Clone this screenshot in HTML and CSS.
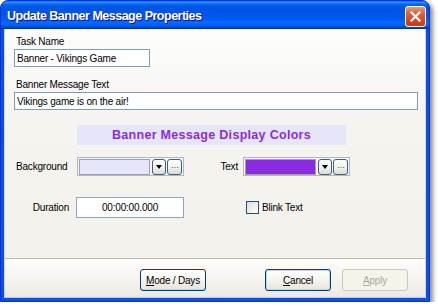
FILE: index.html
```html
<!DOCTYPE html>
<html lang="en">
<head>
  <meta charset="UTF-8">
  <title>Update Banner Message Properties</title>
  <link rel="stylesheet" href="styles.css">
</head>
<body>
  <div class="window">
    <div class="titlebar">
      <span class="title">Update Banner Message Properties</span>
      <button class="close" type="button" aria-label="Close">
        <svg width="19" height="19" viewBox="0 0 19 19">
          <path d="M5.5 5.5 L13.5 13.5 M13.5 5.5 L5.5 13.5" stroke="#fff" stroke-width="2.2" stroke-linecap="square"/>
        </svg>
      </button>
    </div>

    <div class="client">
      <div class="main">
        <div class="field">
          <label for="taskName">Task Name</label>
          <input type="text" id="taskName" class="textbox task" value="Banner - Vikings Game">
        </div>

        <div class="field second">
          <label for="bannerText">Banner Message Text</label>
          <input type="text" id="bannerText" class="textbox wide" value="Vikings game is on the air!">
        </div>

        <div class="band">Banner Message Display Colors</div>

        <div class="row colors">
          <span class="lbl lbl-bg">Background</span>
          <div class="combo">
            <span class="swatch lavender"></span>
            <span class="mini drop"><i class="arrow"></i></span>
            <span class="mini dots">···</span>
          </div>
          <span class="lbl lbl-text">Text</span>
          <div class="combo">
            <span class="swatch purple"></span>
            <span class="mini drop"><i class="arrow"></i></span>
            <span class="mini dots">···</span>
          </div>
        </div>

        <div class="row duration">
          <label class="lbl lbl-dur" for="duration">Duration</label>
          <input type="text" id="duration" class="textbox time" value="00:00:00.000">
          <span class="check"></span>
          <span class="check-label">Blink Text</span>
        </div>
      </div>

      <div class="buttons">
        <button type="button" class="btn"><u>M</u>ode / Days</button>
        <button type="button" class="btn cancel"><u>C</u>ancel</button>
        <button type="button" class="btn apply" disabled><u>A</u>pply</button>
      </div>
    </div>
  </div>
</body>
</html>
```

FILE: styles.css
```css
body {
  margin: 0;
  background: #fff;
  font-family: "Liberation Sans", Arial, sans-serif;
  font-size: 10px;
  letter-spacing: -0.2px;
  color: #000;
}

.window {
  width: 430px;
  height: 302px;
  box-sizing: border-box;
  display: flex;
  flex-direction: column;
  background: #0b50e0;
  border: 1px solid #0831d9;
  border-radius: 8px 8px 0 0;
  box-shadow: 3px 3px 4px rgba(0, 0, 0, 0.45);
}

.titlebar {
  height: 28px;
  display: flex;
  align-items: center;
  justify-content: space-between;
  padding: 0 3px 0 6px;
  border-radius: 7px 7px 0 0;
  background: linear-gradient(to bottom, #0058ee 0%, #3a93ff 4%, #288eff 6%, #127dff 8%, #036ffc 10%, #0262ee 14%, #0057e5 20%, #0054e3 24%, #0055eb 56%, #005bf5 66%, #026afe 76%, #0062ef 86%, #0052d6 92%, #0040ab 96%, #003092 100%);
}

.title {
  padding-top: 1px;
  color: #fff;
  font-size: 12.5px;
  font-weight: bold;
  letter-spacing: -0.5px;
  text-shadow: 1px 1px #0f1089;
}

.close {
  width: 21px;
  height: 21px;
  padding: 0;
  margin-top: 2px;
  display: flex;
  align-items: center;
  justify-content: center;
  border: 1px solid #fff;
  border-radius: 3px;
  background: linear-gradient(to bottom, #e99a7e 0%, #e2643f 30%, #d4481e 70%, #c33b16 100%);
}

.client {
  flex: 1;
  margin: 0 3px 3px;
  display: flex;
  flex-direction: column;
  border-left: 1px solid #d9d6c9;
  border-right: 1px solid #d9d6c9;
}

.main {
  height: 230px;
  box-sizing: border-box;
  padding: 7px 7px 0 9px;
  border-bottom: 1px solid #bcb9a8;
  background: linear-gradient(to bottom, #fdfdfc 0%, #f5f4f0 40%, #f2f1ec 100%);
}

.field label {
  display: block;
  height: 12px;
  line-height: 12px;
  margin: 0 0 1px 2px;
}

.field.second {
  margin-top: 12px;
}

.textbox {
  display: block;
  box-sizing: border-box;
  height: 18px;
  margin: 0;
  padding: 0 2px;
  border: 1px solid #7f9db9;
  background: #fff;
  font-family: inherit;
  font-size: 10px;
  letter-spacing: -0.2px;
  color: #000;
}

.task {
  width: 136px;
}

.wide {
  width: 404px;
}

.band {
  width: 269px;
  height: 20px;
  margin: 15px 0 0 63px;
  line-height: 20px;
  text-align: center;
  background: #e6e6fa;
  color: #8a2be2;
  font-size: 12.5px;
  font-weight: bold;
  letter-spacing: 0.3px;
}

.row {
  display: flex;
  align-items: center;
}

.colors {
  height: 19px;
  margin-top: 12px;
}

.duration {
  height: 21px;
  margin-top: 21px;
}

.lbl {
  box-sizing: border-box;
  flex: none;
}

.lbl-bg {
  width: 63px;
  padding-left: 2px;
}

.lbl-text {
  width: 59px;
  padding-right: 5px;
  text-align: right;
}

.lbl-dur {
  width: 62px;
  padding-right: 7px;
  text-align: right;
}

.combo {
  width: 107px;
  height: 19px;
  box-sizing: border-box;
  display: flex;
  align-items: center;
  padding: 0 1px;
  border: 1px solid #a9b8cc;
  background: #f7f7f4;
}

.swatch {
  width: 72px;
  height: 16px;
  box-sizing: border-box;
  border: 1px solid #a0a0a6;
}

.lavender {
  background: #e6e6fa;
}

.purple {
  background: #8a2be2;
}

.mini {
  width: 15px;
  height: 16px;
  box-sizing: border-box;
  display: flex;
  align-items: center;
  justify-content: center;
  border: 1px solid #3d5f86;
  border-radius: 3px;
  background: linear-gradient(to bottom, #ffffff, #efeee8 60%, #dcdad0);
}

.drop {
  margin-left: 2px;
}

.dots {
  margin-left: 1px;
  font-size: 9px;
  letter-spacing: -0.5px;
  color: #555;
}

.arrow {
  width: 0;
  height: 0;
  margin-top: 1px;
  border-left: 3.5px solid transparent;
  border-right: 3.5px solid transparent;
  border-top: 4px solid #000;
}

.time {
  width: 108px;
  height: 21px;
  text-align: center;
  border-color: #8ea7c2;
}

.check {
  width: 13px;
  height: 13px;
  box-sizing: border-box;
  margin-left: 62px;
  border: 1px solid #1c5180;
  background: linear-gradient(135deg, #dcdcd7, #ffffff);
}

.check-label {
  margin-left: 3px;
}

.buttons {
  flex: 1;
  display: flex;
  align-items: flex-start;
  justify-content: flex-end;
  padding: 9px 17px 0 0;
  border-top: 1px solid #ffffff;
  border-bottom: 1px solid #cdc9b9;
  background: linear-gradient(to bottom, #fdfdfc 0%, #f4f3ef 55%, #eceae2 100%);
}

.btn {
  width: 66px;
  height: 22px;
  padding: 0;
  border: 1px solid #003c74;
  border-radius: 3px;
  background: linear-gradient(to bottom, #ffffff 0%, #f5f4ef 50%, #e6e4da 100%);
  box-shadow: inset 0 -1px 0 #d6d0c5;
  font-family: inherit;
  font-size: 10px;
  letter-spacing: -0.2px;
  color: #000;
}

.cancel {
  margin-left: 59px;
  box-shadow: inset 0 0 0 1px #c2d4ef;
}

.apply {
  margin-left: 11px;
  border-color: #cac8bb;
  background: #f5f4ea;
  box-shadow: none;
  color: #aca899;
}
```
